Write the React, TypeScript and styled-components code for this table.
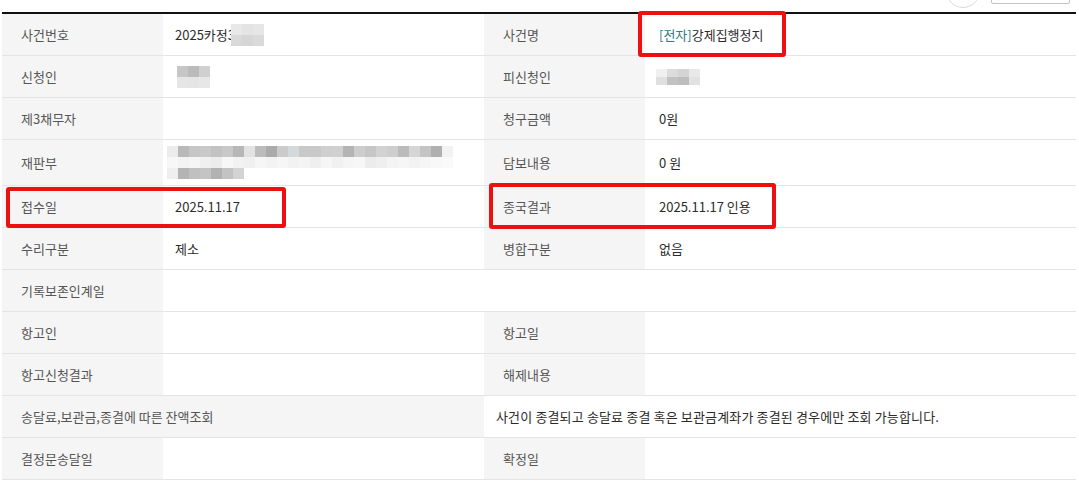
import React from 'react';
import styled, { createGlobalStyle } from 'styled-components';

const GlobalStyle = createGlobalStyle`
  html, body {
    margin: 0;
    padding: 0;
    background: #ffffff;
  }
  body {
    font-family: "Noto Sans CJK KR", "Noto Sans", sans-serif;
    font-size: 13px;
    color: #333;
  }
`;

const Page = styled.div`
  position: relative;
  width: 1079px;
  height: 485px;
  overflow: hidden;
`;

const Toolbar = styled.div`
  display: flex;
  justify-content: flex-end;
  align-items: flex-end;
  gap: 11px;
  height: 12px;
  padding-right: 9px;
  overflow: hidden;
`;

const RoundButton = styled.div`
  width: 32px;
  height: 32px;
  border-radius: 50%;
  border: 1px solid #dcdcdc;
  background: #fff;
  margin-bottom: 4px;
  flex-shrink: 0;
`;

const BoxButton = styled.div`
  width: 77px;
  height: 28px;
  border: 1px solid #c4c4c4;
  border-radius: 2px;
  background: #fff;
  margin-bottom: 8px;
  flex-shrink: 0;
`;

const Grid = styled.div`
  display: grid;
  grid-template-columns: 161px 321px 161px 431px;
  margin-left: 2px;
  width: 1074px;
  border-top: 2px solid #111;
`;

const Cell = styled.div<{ $label?: boolean; $span?: number; $pad?: number }>`
  box-sizing: border-box;
  min-height: 42px;
  display: flex;
  align-items: center;
  grid-column: span ${(p) => p.$span ?? 1};
  border-bottom: 1px solid #e4e4e4;
  background: ${(p) => (p.$label ? '#f5f5f5' : '#fff')};
  color: ${(p) => (p.$label ? '#555' : '#2b2b2b')};
  padding: 6px 12px 6px ${(p) => (p.$label ? 19 : p.$pad ?? 12)}px;
  white-space: nowrap;
`;

const Notice = styled.span`
  letter-spacing: 0.15px;
`;

const Tag = styled.span`
  color: #2a7c86;
`;

const Mosaic = styled.div<{ $cols: number; $cw: number; $ch: number }>`
  display: grid;
  grid-template-columns: repeat(${(p) => p.$cols}, ${(p) => p.$cw}px);
  grid-auto-rows: ${(p) => p.$ch}px;
  flex-shrink: 0;
`;

const Pixel = styled.span``;

const Highlight = styled.div`
  position: absolute;
  box-sizing: border-box;
  border: 4px solid #ee1010;
  border-radius: 3px;
  pointer-events: none;
`;

const Blur: React.FC<{ rows: string[][]; cw?: number; ch?: number; offset?: number }> = ({
  rows,
  cw = 11,
  ch = 11,
  offset = 0,
}) => {
  const cols = Math.max(...rows.map((r) => r.length));
  return (
    <Mosaic $cols={cols} $cw={cw} $ch={ch} style={{ marginLeft: offset }}>
      {rows.flatMap((r, i) =>
        Array.from({ length: cols }, (_, j) => (
          <Pixel key={`${i}-${j}`} style={{ background: r[j] ?? 'transparent' }} />
        ))
      )}
    </Mosaic>
  );
};

const courtRow1 = [
  '#ececec', '#b9b9b9', '#c6c6c6', '#c9c9c9', '#c2c2c2', '#c8c8c8', '#b7b7b7', '#e2e2e2', '#bcbcbc',
  '#ababab', '#cbcbcb', '#d4d9dc', '#c8c8c8', '#c9c9c9', '#cfcfcf', '#d0d0d0', '#b4b4b4', '#cdcdcd',
  '#c6c6c6', '#d2d2d2', '#cecece', '#bbbbbb', '#d6d6d6', '#c4c4c4', '#b0b0b0', '#f2f2f2',
];
const courtRow2 = [
  '#f7f7f7', '#f3f3f3', '#f5f5f5', '#f0f0f0', '#ececec', '#f7f7f7', '#f2f2f2', '#f0f0f0', '#f6f6f6',
  '#f3f3f3', '#f6f6f6', '#f2f2f2', '#f4f4f4', '#efefef', '#f6f6f6', '#f1f1f1', '#f5f5f5', '#f7f7f7',
  '#ececec', '#efefef', '#f4f4f4', '#f6f6f6', '#f2f2f2', '#f5f5f5', '#f8f8f8', '#fafafa',
];
const courtRow3 = ['#efefef', '#b4b4b4', '#c0c0c0', '#c4c4c4', '#b2b2b2', '#c3c3c3', '#d3d3d3'];

const App: React.FC = () => {
  return (
    <Page>
      <GlobalStyle />
      <Toolbar>
        <RoundButton />
        <BoxButton />
      </Toolbar>
      <Grid>
        <Cell $label>사건번호</Cell>
        <Cell>
          2025카정3
          <Blur
            offset={-4}
            rows={[
              ['#e8e8e8', '#e4e4e4', '#e6e6e6'],
              ['#d9d9d9', '#d6d6d6', '#dadada'],
            ]}
          />
        </Cell>
        <Cell $label>사건명</Cell>
        <Cell $pad={14}>
          <Tag>[전자]</Tag>강제집행정지
        </Cell>

        <Cell $label>신청인</Cell>
        <Cell>
          <Blur
            offset={2}
            rows={[
              ['#c6c6c6', '#bbbbbb', '#d0d0d0'],
              ['#e6e6e6', '#e5e5e5', '#e7e7e7'],
            ]}
          />
        </Cell>
        <Cell $label>피신청인</Cell>
        <Cell $pad={14}>
          <Blur
            offset={-3}
            ch={8}
            rows={[
              ['#f0f0f0', '#dcdcdc', '#d4d4d4', '#e9e9e9'],
              ['#e0e0e0', '#c2c2c2', '#bdbdbd', '#e2e2e2'],
            ]}
          />
        </Cell>

        <Cell $label>제3채무자</Cell>
        <Cell />
        <Cell $label>청구금액</Cell>
        <Cell $pad={14}>0원</Cell>

        <Cell $label>재판부</Cell>
        <Cell>
          <Blur offset={-8} rows={[courtRow1, courtRow2, courtRow3]} />
        </Cell>
        <Cell $label>담보내용</Cell>
        <Cell $pad={14}>0 원</Cell>

        <Cell $label>접수일</Cell>
        <Cell>2025.11.17</Cell>
        <Cell $label>종국결과</Cell>
        <Cell $pad={14}>2025.11.17 인용</Cell>

        <Cell $label>수리구분</Cell>
        <Cell>제소</Cell>
        <Cell $label>병합구분</Cell>
        <Cell $pad={14}>없음</Cell>

        <Cell $label>기록보존인계일</Cell>
        <Cell $span={3} />

        <Cell $label>항고인</Cell>
        <Cell />
        <Cell $label>항고일</Cell>
        <Cell />

        <Cell $label>항고신청결과</Cell>
        <Cell />
        <Cell $label>해제내용</Cell>
        <Cell />

        <Cell $label $span={2}>
          송달료,보관금,종결에 따른 잔액조회
        </Cell>
        <Cell $span={2}>
          <Notice>사건이 종결되고 송달료 종결 혹은 보관금계좌가 종결된 경우에만 조회 가능합니다.</Notice>
        </Cell>

        <Cell $label>결정문송달일</Cell>
        <Cell />
        <Cell $label>확정일</Cell>
        <Cell />
      </Grid>

      <Highlight style={{ left: 638, top: 11, width: 148, height: 46 }} />
      <Highlight style={{ left: 6, top: 187, width: 280, height: 41 }} />
      <Highlight style={{ left: 489, top: 183, width: 287, height: 46 }} />
    </Page>
  );
};

export default App;
